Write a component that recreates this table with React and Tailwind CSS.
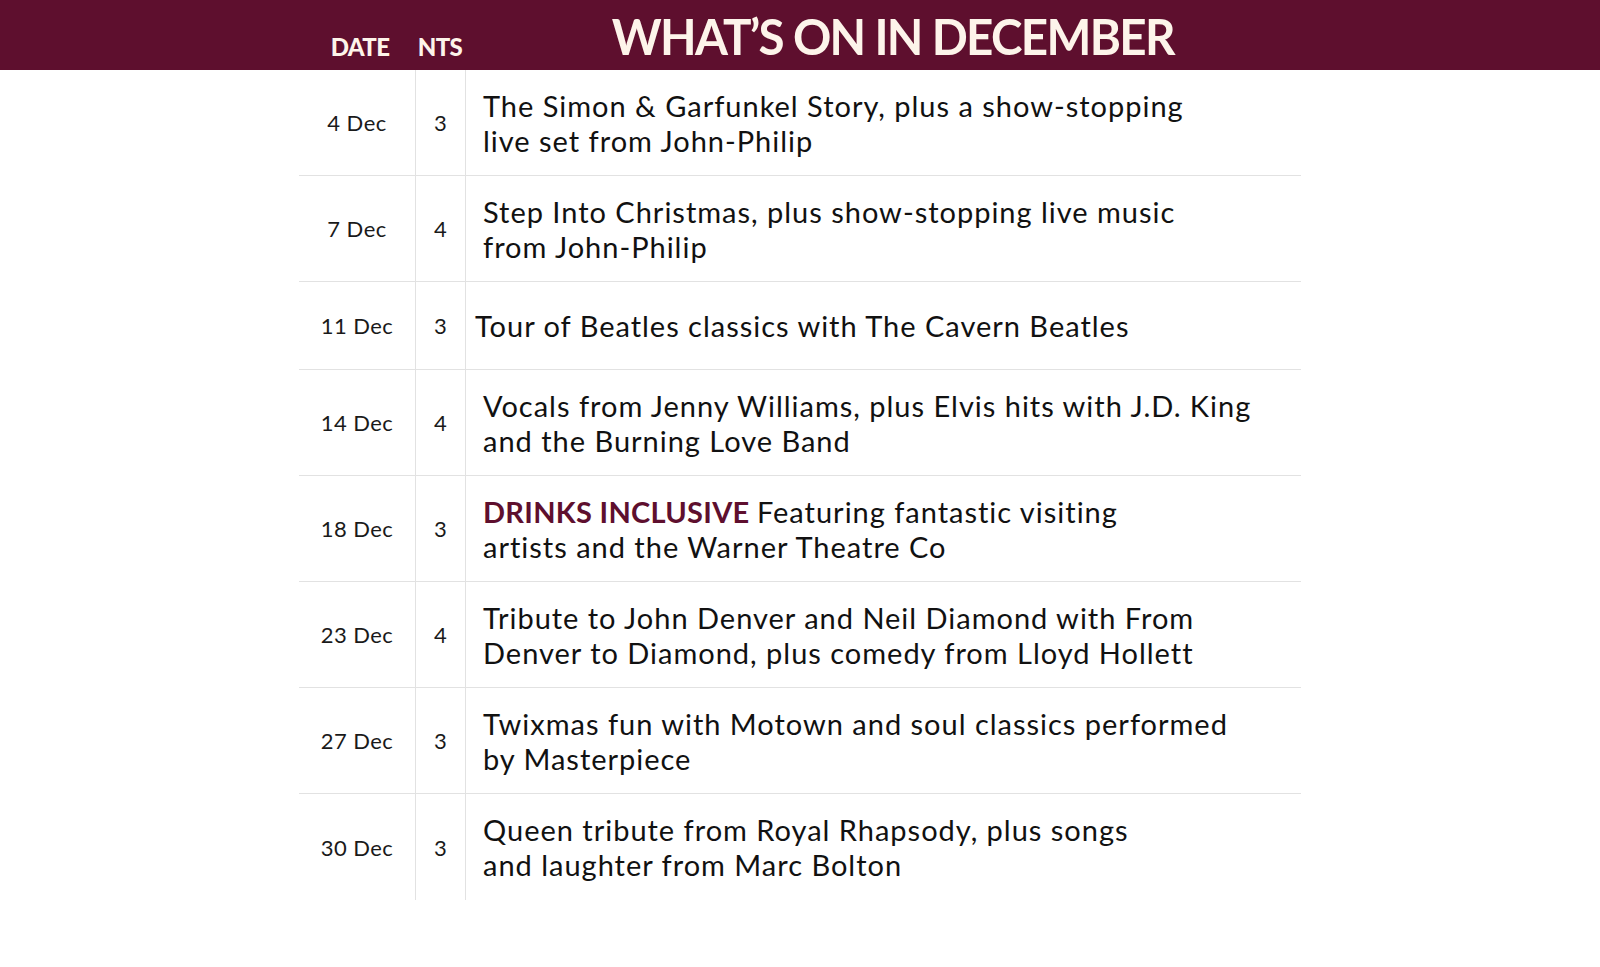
const EVENTS = [
  { date: '4 Dec', nts: '3', lines: ['The Simon & Garfunkel Story, plus a show-stopping', 'live set from John-Philip'] },
  { date: '7 Dec', nts: '4', lines: ['Step Into Christmas, plus show-stopping live music', 'from John-Philip'] },
  { date: '11 Dec', nts: '3', lines: ['Tour of Beatles classics with The Cavern Beatles'], single: true },
  { date: '14 Dec', nts: '4', lines: ['Vocals from Jenny Williams, plus Elvis hits with J.D. King', 'and the Burning Love Band'] },
  { date: '18 Dec', nts: '3', badge: 'DRINKS INCLUSIVE', lines: ['Featuring fantastic visiting', 'artists and the Warner Theatre Co'] },
  { date: '23 Dec', nts: '4', lines: ['Tribute to John Denver and Neil Diamond with From', 'Denver to Diamond, plus comedy from Lloyd Hollett'] },
  { date: '27 Dec', nts: '3', lines: ['Twixmas fun with Motown and soul classics performed', 'by Masterpiece'] },
  { date: '30 Dec', nts: '3', lines: ['Queen tribute from Royal Rhapsody, plus songs', 'and laughter from Marc Bolton'] },
];

function Row({ ev, last }) {
  return (
    <div
      className={`flex ${ev.single ? 'h-[88px]' : 'h-[106px]'} ${last ? '' : 'border-b border-[#e2e2e2]'}`}
    >
      <div className="w-[116px] flex items-center justify-center text-[22px] tracking-[0.02em] text-[#1a1a1a]">
        {ev.date}
      </div>
      <div className="w-[50px] flex items-center justify-center text-[22px] text-[#1a1a1a] border-l border-[#e2e2e2]">
        {ev.nts}
      </div>
      <div
        className={`flex-1 flex flex-col justify-center border-l border-[#e2e2e2] text-[29px] leading-[35px] tracking-[0.034em] text-[#111] ${
          ev.single ? 'pl-[9px]' : 'pl-[17px]'
        }`}
      >
        {ev.lines.map((line, i) => (
          <div key={i} className="whitespace-nowrap">
            {i === 0 && ev.badge && <span className="font-bold tracking-[0.01em] text-[#5e0f2e]">{ev.badge} </span>}
            {line}
          </div>
        ))}
      </div>
    </div>
  );
}

export default function App() {
  return (
    <div className="w-[1600px] h-[967px] bg-white font-['Lato',sans-serif]">
      {/* Header bar */}
      <div className="h-[70px] bg-[#5e0f2e] text-[#fdf4ea]">
        <div className="w-[1002px] mx-auto flex items-end h-full pb-[11px]">
          <div className="w-[116px] text-center text-[24px] font-black leading-none tracking-tight pl-[6px]">DATE</div>
          <div className="w-[50px] text-center text-[24px] font-black leading-none tracking-tight">NTS</div>
          <div className="flex-1 text-center pl-[20px]">
            <span className="inline-block text-[50px] font-bold leading-none tracking-[-0.035em] scale-x-[0.95] translate-y-[2px]">
              WHAT’S ON IN DECEMBER
            </span>
          </div>
        </div>
      </div>

      {/* Table */}
      <div className="w-[1002px] mx-auto">
        {EVENTS.map((ev, i) => (
          <Row key={i} ev={ev} last={i === EVENTS.length - 1} />
        ))}
      </div>
    </div>
  );
}
